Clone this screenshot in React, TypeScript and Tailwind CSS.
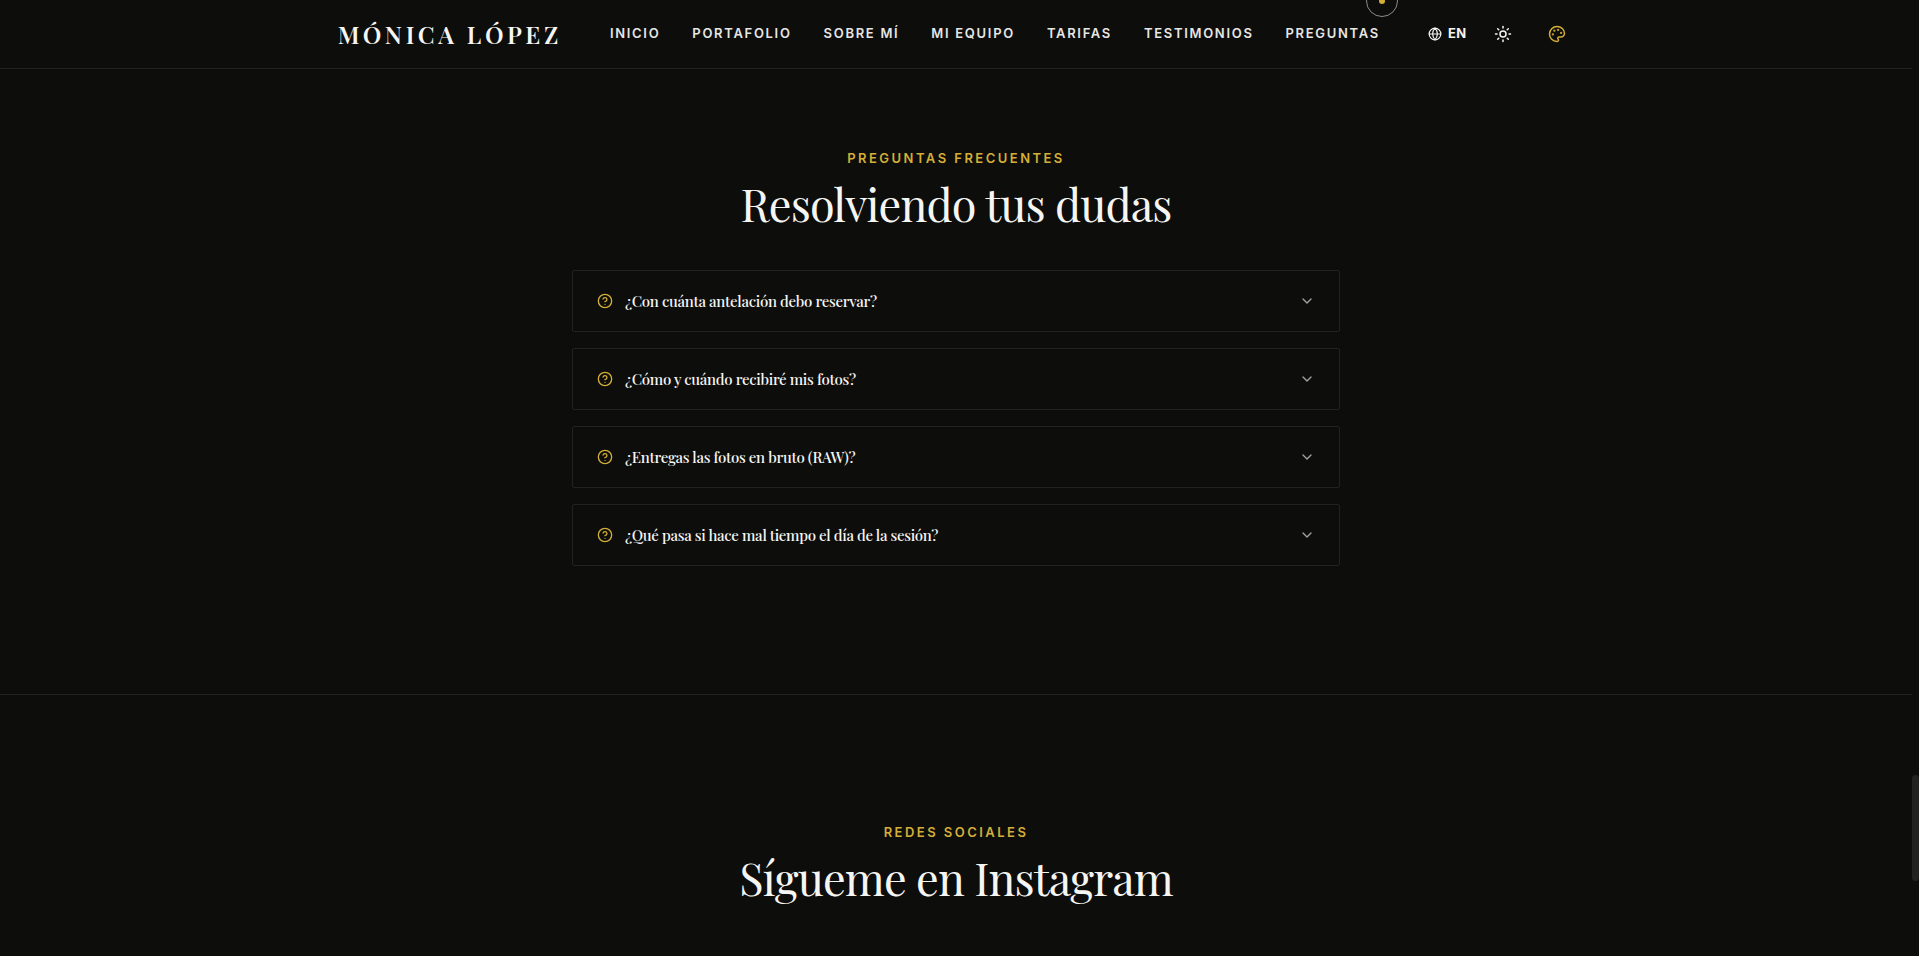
import { useState } from 'react'
import { ChevronDown, CircleHelp, Globe, Palette, Sun } from 'lucide-react'

const NAV_LINKS = [
  { href: '#inicio', label: 'Inicio' },
  { href: '#portafolio', label: 'Portafolio' },
  { href: '#sobre-mi', label: 'Sobre mí' },
  { href: '#equipo', label: 'Mi equipo' },
  { href: '#tarifas', label: 'Tarifas' },
  { href: '#testimonios', label: 'Testimonios' },
  { href: '#preguntas', label: 'Preguntas' },
]

const FAQS = [
  {
    question: '¿Con cuánta antelación debo reservar?',
    answer: 'Lo ideal es reservar con varias semanas de antelación.',
  },
  {
    question: '¿Cómo y cuándo recibiré mis fotos?',
    answer: 'Recibirás tus fotos en una galería privada online.',
  },
  {
    question: '¿Entregas las fotos en bruto (RAW)?',
    answer: 'No, todas las fotos se entregan editadas.',
  },
  {
    question: '¿Qué pasa si hace mal tiempo el día de la sesión?',
    answer: 'Buscamos juntos una nueva fecha sin coste adicional.',
  },
]

function Header() {
  return (
    <header className="border-b border-[#222221]">
      <div className="flex h-[68px] items-center justify-center gap-12">
        <a
          href="#inicio"
          className="font-['Playfair_Display','Liberation_Serif',serif] text-2xl font-semibold tracking-[0.15em] whitespace-nowrap uppercase"
        >
          Mónica López
        </a>
        <nav className="flex items-center gap-8">
          {NAV_LINKS.map(link => (
            <a
              key={link.href}
              href={link.href}
              className="text-[13px] font-semibold tracking-[0.13em] whitespace-nowrap text-[#e6e6e4] uppercase"
            >
              {link.label}
            </a>
          ))}
        </nav>
        <div className="flex items-center gap-5">
          <button type="button" className="flex items-center gap-1.5 text-[13px] font-bold tracking-wide">
            <Globe className="size-3.5" />
            EN
          </button>
          <button type="button" aria-label="Cambiar tema" className="p-2">
            <Sun className="size-[18px]" />
          </button>
          <button type="button" aria-label="Cambiar color" className="p-2 text-[#d4af37]">
            <Palette className="size-[18px]" />
          </button>
        </div>
      </div>
    </header>
  )
}

function SectionTitle({ eyebrow, title }: { eyebrow: string; title: string }) {
  return (
    <div className="text-center">
      <p className="text-[13px] leading-[18px] font-semibold tracking-[0.19em] text-[#d4af37] uppercase">{eyebrow}</p>
      <h2 className="mt-2 font-['Playfair_Display','Liberation_Serif',serif] text-[45px] leading-[56px] tracking-[-0.02em]">
        {title}
      </h2>
    </div>
  )
}

function FaqItem({ question, answer }: { question: string; answer: string }) {
  const [open, setOpen] = useState(false)

  return (
    <div className="rounded-xs border border-[#222221]">
      <button
        type="button"
        aria-expanded={open}
        onClick={() => setOpen(!open)}
        className="flex w-full items-center justify-between px-6 py-5 text-left"
      >
        <span className="flex items-center gap-3">
          <CircleHelp className="size-4 text-[#d4af37]" />
          <span className="font-['Playfair_Display','Liberation_Serif',serif] text-[15px] leading-5 font-medium tracking-[-0.02em]">
            {question}
          </span>
        </span>
        <ChevronDown className={`size-4 text-[#a3a3a0] ${open ? 'rotate-180' : ''}`} />
      </button>
      {open && <p className="px-6 pb-6 text-sm text-[#a3a3a0]">{answer}</p>}
    </div>
  )
}

function Cursor() {
  return (
    <div className="pointer-events-none fixed -top-[15px] left-[1366px] flex size-8 items-center justify-center rounded-full border border-[#8c8c8a]">
      <span className="size-1.5 rounded-full bg-[#d4af37]" />
    </div>
  )
}

export default function App() {
  return (
    <div className="h-screen overflow-hidden bg-[#0d0d0b] font-['Inter',sans-serif] text-[#f5f5f3]">
      <div className="mr-[7px]">
        <Header />
        <main>
          <section id="preguntas" className="px-6 pt-20 pb-32">
            <SectionTitle eyebrow="Preguntas frecuentes" title="Resolviendo tus dudas" />
            <div className="mx-auto mt-[39px] flex max-w-3xl flex-col gap-4">
              {FAQS.map(faq => (
                <FaqItem key={faq.question} {...faq} />
              ))}
            </div>
          </section>
          <section id="instagram" className="border-t border-[#222221] px-6 pt-32">
            <SectionTitle eyebrow="Redes sociales" title="Sígueme en Instagram" />
          </section>
        </main>
      </div>
      <div className="fixed top-[775px] right-0 h-[106px] w-[7px] rounded-full bg-[#222221]" />
      <Cursor />
    </div>
  )
}
